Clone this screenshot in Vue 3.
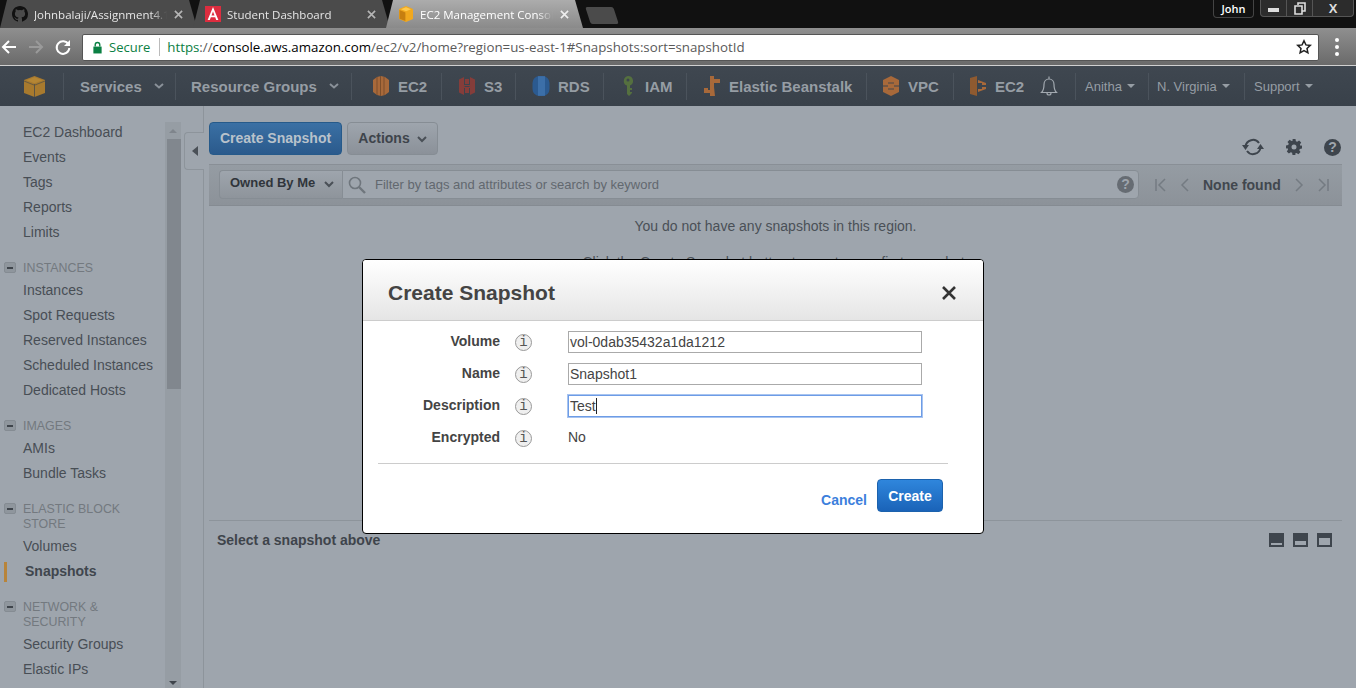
<script setup>
const tabs = [
  { label: 'Johnbalaji/Assignment4.1', kind: 'gh' },
  { label: 'Student Dashboard', kind: 'ng' },
  { label: 'EC2 Management Console', kind: 'aws', active: true },
];
const shortcuts = [
  { label: 'EC2', kind: 'ec2', w: 90, pad: 20 },
  { label: 'S3', kind: 's3', w: 74, pad: 16 },
  { label: 'RDS', kind: 'rds', w: 88, pad: 16 },
  { label: 'IAM', kind: 'iam', w: 83, pad: 15 },
  { label: 'Elastic Beanstalk', kind: 'eb', w: 180, pad: 16 },
  { label: 'VPC', kind: 'vpc', w: 87, pad: 15 },
];
const groups = [
  { items: ['EC2 Dashboard', 'Events', 'Tags', 'Reports', 'Limits'] },
  { title: 'INSTANCES', items: ['Instances', 'Spot Requests', 'Reserved Instances', 'Scheduled Instances', 'Dedicated Hosts'] },
  { title: 'IMAGES', items: ['AMIs', 'Bundle Tasks'] },
  { title: 'ELASTIC BLOCK STORE', items: ['Volumes', 'Snapshots'] },
  { title: 'NETWORK & SECURITY', items: ['Security Groups', 'Elastic IPs'] },
];
const fields = [
  { label: 'Volume', value: 'vol-0dab35432a1da1212' },
  { label: 'Name', value: 'Snapshot1' },
  { label: 'Description', value: 'Test', focus: true },
  { label: 'Encrypted', text: 'No' },
];
</script>

<template>
  <div class="page">
    <div class="tabstrip">
      <div v-for="t in tabs" :key="t.label" class="tab" :class="{ active: t.active }">
        <svg v-if="t.kind === 'gh'" class="fav" viewBox="0 0 16 16"><path fill="#111" d="M8 0C3.58 0 0 3.58 0 8c0 3.54 2.29 6.53 5.47 7.59.4.07.55-.17.55-.38v-1.34c-2.23.48-2.7-1.07-2.7-1.07-.36-.92-.89-1.17-.89-1.17-.73-.5.05-.49.05-.49.8.06 1.23.83 1.23.83.72 1.22 1.87.87 2.33.66.07-.52.28-.87.5-1.07-1.78-.2-3.64-.89-3.64-3.95 0-.87.31-1.59.82-2.15-.08-.2-.36-1.02.08-2.12 0 0 .67-.21 2.2.82a7.6 7.6 0 0 1 4 0c1.53-1.04 2.2-.82 2.2-.82.44 1.1.16 1.92.08 2.12.51.56.82 1.27.82 2.15 0 3.07-1.87 3.75-3.65 3.95.29.25.54.73.54 1.48v2.2c0 .21.15.46.55.38A8 8 0 0 0 16 8c0-4.42-3.58-8-8-8z"/></svg>
        <svg v-else-if="t.kind === 'ng'" class="fav" viewBox="0 0 16 16"><path fill="#dd2d3f" d="M0 0h16v16H0z"/><path fill="#fff" d="M8 1 2.6 14h2.2l1-2.7h4.4l1 2.7h2.2zM6.5 9.5 8 5.4l1.5 4.1z"/></svg>
        <svg v-else class="fav" viewBox="0 0 16 16"><path fill="#f0a81e" d="M8 0 1 3v10l7 3 7-3V3z"/><path fill="#c67f10" d="M7.400 6.500 1.500 4v8.700L7.400 15z"/><path fill="#ffc94d" d="M8 1.200 3 3.300l5 2 5-2z"/></svg>
        <span class="tab-label">{{ t.label }}</span>
        <svg class="tab-close" viewBox="0 0 10 10"><path stroke-width="1.800" d="m1 1 8 8M9 1 1 9"/></svg>
      </div>
      <div class="newtab"></div>
      <div class="win">
        <span class="win-user">John</span>
        <div class="win-ctrls">
          <span class="wc min"><i></i></span>
          <span class="wc max"><svg width="12" height="13" viewBox="0 0 12 13"><path fill="none" stroke="#ddd" stroke-width="1.6" d="M4 3V1h7v8H8.500M1 4h7v8H1z"/></svg></span>
          <span class="wc close">X</span>
        </div>
      </div>
    </div>

    <div class="toolbar">
      <svg class="tb-ic" viewBox="0 0 18 18"><path fill="none" stroke="#fff" stroke-width="2" d="M16 9H3M9 3 3 9l6 6"/></svg>
      <svg class="tb-ic" viewBox="0 0 18 18"><path fill="none" stroke="#9a9a9a" stroke-width="2" d="M2 9h13M9 3l6 6-6 6"/></svg>
      <svg class="tb-ic" viewBox="0 0 18 18"><path fill="none" stroke="#fff" stroke-width="2" d="M14.500 6.500A6.300 6.300 0 1 0 15.300 10"/><path fill="#fff" d="M16 2v6h-6z"/></svg>
      <div class="omnibox">
        <svg class="lock" viewBox="0 0 12 14"><path fill="#0b8043" d="M1.500 6h9v7.500h-9z"/><path fill="none" stroke="#0b8043" stroke-width="1.500" d="M3.500 6V4a2.500 2.500 0 0 1 5 0v2"/></svg>
        <span class="secure">Secure</span>
        <span class="omni-sep"></span>
        <span class="url"><span class="u-g">https</span><span class="u-d">://</span><span class="u-b">console.aws.amazon.com</span><span class="u-d">/ec2/v2/home?region=us-east-1#Snapshots:sort=snapshotId</span></span>
        <svg class="star" viewBox="0 0 16 16"><path fill="none" stroke="#222" stroke-width="1.500" d="m8 1.800 1.900 4.100 4.400.5-3.300 3 .9 4.400L8 11.600l-3.900 2.200.9-4.400-3.300-3 4.400-.5z"/></svg>
      </div>
      <div class="kebab"><i></i><i></i><i></i></div>
    </div>

    <div class="awsnav">
      <div class="nv logo">
        <svg width="21" height="21" viewBox="0 0 21 21"><path fill="#a87a2e" d="M10.500 0 0 4v13l10.500 4L21 17V4z"/><path fill="#3c444d" d="M10 8h1v13h-1z" opacity=".7"/><path fill="#c0903a" d="M10.500 1.200 2.500 4.200l8 3 8-3z" opacity=".55"/><path fill="#3c444d" d="M0 4.500 10 8.500v1L0 5.500zM21 4.500 11 8.500v1l10-4z" opacity=".6"/></svg>
      </div>
      <div class="nv menu w112"><b>Services</b><svg class="chev" viewBox="0 0 10 6"><path fill="none" stroke="#8a9199" stroke-width="2" d="m1 1 4 3.500L9 1"/></svg></div>
      <div class="nv menu w176"><b>Resource Groups</b><svg class="chev" viewBox="0 0 10 6"><path fill="none" stroke="#8a9199" stroke-width="2" d="m1 1 4 3.500L9 1"/></svg></div>
      <div v-for="s in shortcuts" :key="s.label + s.kind" class="nv short" :style="{ width: s.w + 'px', paddingLeft: s.pad + 'px' }">
        <svg v-if="s.kind === 'ec2'" class="si" viewBox="0 0 18 20"><path fill="#a8693a" d="M5 1 9 0l4 1 4 3v12l-4 3-4 1-4-1-4-3V4z"/><path stroke="#7d4f2c" d="M5 1v18M8.500 0v20M12 1v18"/></svg>
        <svg v-else-if="s.kind === 's3'" class="si" viewBox="0 0 18 20"><path fill="#853d3a" d="M1 3.500 6 1v18l-5-2.500zM17 3.500 12 1v18l5-2.500z"/><path fill="#853d3a" d="M7 3h4v5H7zM7 12h4v5H7z"/><path fill="none" stroke="#853d3a" d="M6 9.500h6v2H6z"/></svg>
        <svg v-else-if="s.kind === 'rds'" class="si" viewBox="0 0 18 20"><rect x="0.500" y="0" width="17" height="20" rx="7" fill="#2b5a90"/><path fill="#3c6fa8" d="M6 .2h7v19.600H6z"/></svg>
        <svg v-else-if="s.kind === 'iam'" class="si" viewBox="0 0 18 20"><path fill="#55703f" fill-rule="evenodd" d="M9 0a5 5 0 0 1 2 9.600V12h2v2h-2v2h2v1l-3 3-2-2V9.600A5 5 0 0 1 9 0zm0 2.500a1.500 1.500 0 1 0 0 3 1.500 1.500 0 0 0 0-3z"/></svg>
        <svg v-else-if="s.kind === 'eb'" class="si" viewBox="0 0 18 20"><path fill="#a8693a" d="M7 0h4v3h6v4h-6v4l1 9H7v-3H1v-5h4v2h2z"/></svg>
        <svg v-else class="si" viewBox="0 0 18 20"><path fill="#a8693a" d="M9 0 1 4v12l8 4 8-4V4z"/><path fill="#3c444d" d="M1 9.500h5v1H1zM12 9.500h5v1h-5z"/><path fill="#3c444d" d="M6 6h6v2H6zM6 12h6v2H6z" opacity=".45"/></svg>
        <b>{{ s.label }}</b>
      </div>
      <div class="nv last-ec2">
        <svg class="si" viewBox="0 0 18 20"><path fill="#8f5a30" d="M1 2 8 0v20l-7-2z"/><path fill="#a8693a" d="M9 4l8 3v2h-4V7H9zM9 13h4v-2h4v2l-8 3z"/></svg>
        <b>EC2</b>
        <svg class="bell" viewBox="0 0 18 22"><path fill="none" stroke="#a2a9b0" stroke-width="1.200" d="M1.500 17.500h15c-2-2-2.500-4-2.500-8 0-3-2-5.500-5-5.500S4 6.500 4 9.500c0 4-.5 6-2.500 8zM9 1.500V4M7 18a2 2 0 0 0 4 0"/></svg>
      </div>
      <div class="nv um w73"><span>Anitha</span><em></em></div>
      <div class="nv um w96"><span>N. Virginia</span><em></em></div>
      <div class="nv um"><span>Support</span><em></em></div>
    </div>

    <div class="body">
      <aside class="side">
        <div class="side-list">
          <div v-for="(g, i) in groups" :key="i" class="grp">
            <div v-if="g.title" class="grp-h"><span class="minus"><i></i></span><span>{{ g.title }}</span></div>
            <div v-for="it in g.items" :key="it" class="item" :class="{ cur: it === 'Snapshots' }">{{ it }}</div>
          </div>
        </div>
        <div class="sbar">
          <span class="up"></span>
          <span class="thumb"></span>
          <span class="down"></span>
        </div>
        <div class="handle"><span></span></div>
      </aside>

      <main class="main">
        <div class="actions">
          <button class="btn primary">Create Snapshot</button>
          <button class="btn second">Actions<svg class="achev" viewBox="0 0 10 7"><path fill="none" stroke="#4a5057" stroke-width="2" d="m1 1 4 4 4-4"/></svg></button>
          <div class="a-icons">
            <svg width="22" height="20" viewBox="0 0 22 20"><path fill="none" stroke="#3e454d" stroke-width="2" d="M3.500 9.500A7.500 7.500 0 0 1 17 6M18.500 10.500A7.500 7.500 0 0 1 5 14"/><path fill="#3e454d" d="m0 8 7 0-3.500 5zM15 12l7 0-3.500-5z"/></svg>
            <svg width="16" height="16" viewBox="0 0 16 16"><path fill="#3e454d" fill-rule="evenodd" d="M6.500 0h3l.4 2.200 1.300.6L13.100 1.500l2.100 2.100-1.300 1.900.6 1.300L16 6.500v3l-2.200.4-.6 1.300 1.300 1.900-2.100 2.100-1.900-1.300-1.300.6L9.500 16h-3l-.4-2.200-1.300-.6-1.900 1.300L.8 12.400l1.300-1.900-.6-1.300L0 9.500v-3l2.200-.4.600-1.300L1.500 2.900 3.600.8l1.900 1.300 1.300-.6zM8 5.500a2.500 2.500 0 1 0 0 5 2.500 2.500 0 0 0 0-5z"/></svg>
            <span class="qm">?</span>
          </div>
        </div>
        <div class="filter">
          <div class="owned"><span>Owned By Me</span><svg class="achev" viewBox="0 0 10 7"><path fill="none" stroke="#4a5057" stroke-width="2" d="m1 1 4 4 4-4"/></svg></div>
          <div class="search">
            <svg width="18" height="18" viewBox="0 0 18 18"><circle cx="7" cy="7" r="5.500" fill="none" stroke="#6f767d" stroke-width="1.600"/><path stroke="#6f767d" stroke-width="2.400" d="m11 11 6 6"/></svg>
            <span class="ph">Filter by tags and attributes or search by keyword</span>
            <span class="qm sm">?</span>
          </div>
          <div class="pager">
            <svg width="14" height="14" viewBox="0 0 14 14"><path fill="none" stroke="#747b82" stroke-width="1.500" d="M2 1v12M11 1 5 7l6 6"/></svg>
            <svg width="14" height="14" viewBox="0 0 14 14"><path fill="none" stroke="#747b82" stroke-width="1.500" d="M10 1 4 7l6 6"/></svg>
            <b>None found</b>
            <svg width="14" height="14" viewBox="0 0 14 14"><path fill="none" stroke="#747b82" stroke-width="1.500" d="m4 1 6 6-6 6"/></svg>
            <svg width="14" height="14" viewBox="0 0 14 14"><path fill="none" stroke="#747b82" stroke-width="1.500" d="M12 1v12M3 1l6 6-6 6"/></svg>
          </div>
        </div>
        <div class="results">
          <p>You do not have any snapshots in this region.</p>
          <p>Click the Create Snapshot button to create your first snapshot.</p>
        </div>
        <div class="lower">
          <b>Select a snapshot above</b>
          <div class="panes">
            <span class="pane p1"><i></i></span>
            <span class="pane p2"><i></i></span>
            <span class="pane p3"><i></i></span>
          </div>
        </div>
      </main>
    </div>

    <section class="modal">
      <header class="m-head">
        <h2>Create Snapshot</h2>
        <svg width="14" height="14" viewBox="0 0 14 14"><path stroke="#333" stroke-width="2.600" d="m1 1 12 12M13 1 1 13"/></svg>
      </header>
      <div class="m-body">
        <div v-for="f in fields" :key="f.label" class="m-row">
          <label>{{ f.label }}</label>
          <span class="info">i</span>
          <div v-if="f.value" class="input" :class="{ focus: f.focus }">{{ f.value }}<i v-if="f.focus" class="caret"></i></div>
          <span v-else class="plain">{{ f.text }}</span>
        </div>
      </div>
      <div class="m-foot">
        <a class="cancel">Cancel</a>
        <button class="create">Create</button>
      </div>
    </section>
  </div>
</template>

<style>
html, body { margin: 0; padding: 0; overflow: hidden; background: #9ea5ad; }
</style>

<style scoped>
.page { position: relative; width: 1356px; height: 688px; overflow: hidden; background: #9ea5ad; font-family: "Liberation Sans", Arial, sans-serif; color: #40464d; }

.tabstrip { height: 28px; background: #111; display: flex; align-items: flex-end; }
.tab { width: 197px; height: 28px; margin-right: -4px; box-sizing: border-box; padding: 0 14px 0 12px; display: flex; align-items: center; background: #4b4b4b; clip-path: polygon(0 100%, 7px 0, calc(100% - 8px) 0, 100% 100%); color: #e6e6e6; font: 11.5px "Open Sans", sans-serif; }
.tab.active { background: linear-gradient(#acacac, #8a8a8a); color: #fff; }
.fav { width: 16px; height: 16px; flex: none; margin-right: 6px; }
.tab-label { flex: 1; overflow: hidden; white-space: nowrap; min-width: 0; -webkit-mask-image: linear-gradient(90deg, #000 88%, transparent); mask-image: linear-gradient(90deg, #000 88%, transparent); }
.tab-close { flex: none; width: 9px; height: 9px; margin-left: 7px; stroke: #b5b5b5; }
.tab.active .tab-close { stroke: #eee; }
.newtab { width: 28px; height: 17px; margin: 0 0 4px 9px; background: #4b4b4b; transform: skewX(18deg); border-radius: 2px; align-self: flex-end; }
.win { margin-left: auto; margin-right: 2px; align-self: flex-start; display: flex; gap: 6px; }
.win-user { width: 39px; height: 17px; border: 1px solid #444; border-top: 0; border-radius: 0 0 4px 4px; color: #fff; font: 600 11px "Open Sans", sans-serif; display: flex; align-items: center; justify-content: center; }
.win-ctrls { display: flex; width: 94px; height: 17px; border: 1px solid #555; border-top: 0; border-radius: 0 0 4px 4px; background: #2c2c2c; box-sizing: border-box; }
.wc { display: flex; align-items: center; justify-content: center; border-right: 1px solid #555; width: 25px; }
.wc.close { flex: 1; border: 0; color: #ddd; font: bold 13px "Liberation Sans", sans-serif; }
.min i { width: 11px; height: 4px; background: #ddd; margin-top: 3px; }

.toolbar { height: 38px; box-sizing: border-box; padding: 5px 0 4px 0; display: flex; align-items: center; background: linear-gradient(#8f8f8f, #6a6a6a); border-bottom: 1px solid #d0d0d0; }
.tb-ic { width: 18px; height: 18px; flex: none; margin-right: 9px; }
.omnibox { width: 1237px; height: 27px; margin-left: 1px; box-sizing: border-box; background: #fff; border: 1px solid #555; border-radius: 2px; display: flex; align-items: center; padding: 0 6px 0 9px; }
.lock { width: 11px; height: 13px; flex: none; }
.secure { font: 13px "Open Sans", sans-serif; color: #0b8043; margin-left: 6px; }
.omni-sep { width: 1px; height: 18px; background: #bbb; margin: 0 7px 0 9px; }
.url { font: 13.3px "Open Sans", sans-serif; flex: 1; white-space: nowrap; }
.u-g { color: #0b8043; }
.u-d { color: #5a5a5a; }
.u-b { color: #000; }
.star { width: 16px; height: 16px; flex: none; }
.kebab { margin-left: 16px; display: flex; flex-direction: column; gap: 3px; }
.kebab i { width: 4px; height: 4px; border-radius: 2px; background: #fff; }

.awsnav { height: 40px; background: linear-gradient(#3f4750, #39414a); display: flex; align-items: center; color: #9aa1a8; box-sizing: border-box; }
.nv { height: 27px; display: flex; align-items: center; border-right: 1px solid #4b535c; box-sizing: border-box; flex: none; }
.nv b { font-size: 15px; color: #969da4; white-space: nowrap; }
.logo { width: 64px; padding-left: 24px; }
.menu { padding-left: 16px; justify-content: flex-start; }
.w112 { width: 112px; }
.w176 { width: 176px; padding-left: 15px; }
.chev { width: 10px; height: 6px; margin-left: 12px; }
.short { gap: 8px; }
.si { width: 18px; height: 20px; flex: none; }
.last-ec2 { width: 122px; padding-left: 15px; gap: 8px; }
.bell { width: 18px; height: 22px; margin-left: 8px; }
.um { padding-left: 9px; font-size: 13px; color: #969da4; }
.um em { width: 0; height: 0; border: 4px solid transparent; border-top: 4px solid #969da4; border-bottom: 0; margin-left: 5px; }
.w73 { width: 73px; }
.w96 { width: 96px; padding-left: 8px; }
.um:last-child { border: 0; }

.body { height: 582px; display: flex; }
.side { position: relative; width: 204px; flex: none; box-sizing: border-box; border-right: 1px solid #8d949b; display: flex; padding-top: 14px; }
.side-list { width: 165px; flex: none; }
.grp-h { position: relative; margin: 16px 0 2px; padding-left: 23px; width: 125px; font-size: 12.4px; line-height: 15px; color: #73797f; }
.minus { position: absolute; left: 4px; top: 1px; width: 12px; height: 11px; box-sizing: border-box; border: 1px solid #858c93; border-radius: 2px; background: #8f969d; display: flex; align-items: center; justify-content: center; }
.minus i { width: 6px; height: 2px; background: #3f454c; }
.item { height: 25px; line-height: 25px; padding-left: 23px; font-size: 14px; color: #484e55; white-space: nowrap; }
.item.cur { font-weight: bold; padding-left: 25px; color: #40464d; position: relative; }
.item.cur::before { content: ""; position: absolute; left: 4px; top: 3px; width: 3px; height: 20px; background: #b8843a; }
.sbar { position: absolute; left: 165px; top: 16px; bottom: 0; width: 16px; background: #969da4; display: flex; flex-direction: column; align-items: center; }
.up, .down { width: 0; height: 0; border: 4px solid transparent; flex: none; }
.up { border-bottom: 4px solid #7f858c; border-top: 0; margin: 7px 0 6px; }
.thumb { width: 14px; height: 250px; background: #81878e; margin-left: 2px; }
.down { border-top: 4px solid #3f454c; border-bottom: 0; margin-top: auto; margin-bottom: 3px; }
.handle { position: absolute; left: 183px; top: 26px; width: 20px; height: 38px; box-sizing: border-box; border: 1px solid #8d949b; border-right: 0; border-radius: 4px 0 0 4px; background: #9ea5ad; display: flex; align-items: center; justify-content: center; margin-left: 1px; }
.handle::after { content: ""; position: absolute; right: -1px; top: 0; bottom: 0; width: 1px; background: #9ea5ad; }
.handle span { width: 0; height: 0; border: 5px solid transparent; border-right: 6px solid #4a5057; border-left: 0; }

.main { width: 1133px; margin-left: 5px; flex: none; display: flex; flex-direction: column; }
.actions { height: 58px; display: flex; align-items: flex-start; padding-top: 16px; box-sizing: border-box; position: relative; }
button { font-family: inherit; }
.btn { height: 33px; box-sizing: border-box; border-radius: 4px; font-size: 14px; font-weight: bold; padding: 0 0 2px; }
.primary { width: 133px; border: 1px solid #265a8a; background: linear-gradient(#3a70a4, #2b5a8c); color: #b9c2cb; }
.second { width: 91px; margin-left: 5px; border: 1px solid #868d94; background: linear-gradient(#9ea5ad, #8b9199); color: #3e444b; }
.achev { width: 10px; height: 7px; margin-left: 7px; }
.a-icons { margin-left: auto; width: 99px; height: 20px; margin-top: 15px; margin-right: 1px; display: flex; align-items: center; justify-content: space-between; }
.qm { width: 17px; height: 17px; border-radius: 50%; background: #3e454d; color: #9ea5ad; font: bold 14px/17px "Liberation Sans", sans-serif; text-align: center; flex: none; }
.filter { height: 42px; box-sizing: border-box; background: linear-gradient(#959ca3, #8c9299); border-top: 1px solid #898f96; border-bottom: 1px solid #858b92; padding: 5px 0 6px 10px; display: flex; align-items: stretch; }
.owned { width: 123px; box-sizing: border-box; border: 1px solid #868d94; border-right: 0; border-radius: 4px 0 0 4px; background: linear-gradient(#9ea5ad, #8e949b); display: flex; align-items: center; padding-left: 10px; font-size: 13px; font-weight: bold; color: #30353b; white-space: nowrap; }
.owned span { margin-bottom: 4px; }
.owned .achev { margin-left: 9px; }
.search { width: 797px; box-sizing: border-box; border: 1px solid #868d94; border-radius: 0 4px 4px 0; background: #9ea5ad; display: flex; align-items: center; padding: 0 1px 0 5px; }
.ph { flex: 1; font-size: 13px; color: #62686f; margin-left: 9px; }
.qm.sm { background: #666c73; color: #9ea5ad; margin-right: 3px; }
.pager { width: 193px; display: flex; align-items: center; padding-left: 15px; box-sizing: border-box; gap: 10px; }
.pager b { font-size: 14px; color: #41474e; white-space: nowrap; margin: 0 1px 0 1px; }
.results { height: 315px; box-sizing: border-box; border-bottom: 1px solid #8d949b; padding-top: 12px; text-align: center; font-size: 14px; color: #4a5057; }
.results p { margin: 0 0 19px; line-height: 17px; }
.lower { flex: 1; display: flex; justify-content: space-between; align-items: flex-start; padding: 11px 10px 0 8px; }
.lower b { font-size: 14px; color: #3e444b; }
.panes { display: flex; gap: 9px; margin-top: 1px; }
.pane { width: 15px; height: 14px; background: #3e454d; position: relative; display: block; }
.pane i { position: absolute; left: 2px; right: 2px; bottom: 2px; background: #9ea5ad; }
.p1 i { height: 2px; }
.p2 i { height: 4px; }
.p3 i { height: 7px; }

.modal { position: absolute; left: 362px; top: 259px; width: 622px; height: 275px; box-sizing: border-box; background: #fff; border: 1px solid #000; border-radius: 4px; overflow: hidden; color: #444; }
.m-head { height: 61px; box-sizing: border-box; border-bottom: 1px solid #ccc; background: linear-gradient(#fff, #e5e5e5); display: flex; align-items: center; justify-content: space-between; padding: 6px 27px 0 25px; }
.m-head h2 { margin: 0; font-size: 21px; font-weight: bold; color: #444; }
.m-body { margin: 0 35px 0 15px; padding: 5px 0 9px; border-bottom: 1px solid #ccc; height: 143px; box-sizing: border-box; }
.m-row { height: 32px; display: flex; align-items: center; }
.m-row label { width: 122px; text-align: right; font-size: 14px; font-weight: bold; color: #444; margin-bottom: 2px; }
.info { width: 17px; height: 17px; box-sizing: border-box; margin: 0 0 0 15px; border: 1px solid #999; border-radius: 50%; background: #efefef; color: #555; font: normal 14px/15px "Liberation Mono", monospace; text-align: center; flex: none; }
.input { width: 354px; height: 22px; margin-left: 36px; box-sizing: border-box; border: 1px solid #aaa; font-size: 14px; line-height: 20px; padding-left: 1px; color: #444; display: flex; align-items: center; }
.input.focus { border: 1px solid #6d9ce6; box-shadow: 0 0 0 1px #a8c4f0; }
.caret { width: 1px; height: 16px; background: #222; }
.plain { margin-left: 36px; margin-bottom: 2px; font-size: 14px; color: #444; }
.m-foot { display: flex; justify-content: flex-end; align-items: center; gap: 10px; padding: 15px 40px 0 0; }
.cancel { font-size: 14px; font-weight: bold; color: #3c7fdc; margin-top: 8px; }
.create { width: 66px; height: 33px; box-sizing: border-box; border: 1px solid #1c62ad; border-radius: 4px; background: linear-gradient(#2f86dc, #1a63b8); color: #fff; font-size: 14px; font-weight: bold; padding: 0; }
</style>
